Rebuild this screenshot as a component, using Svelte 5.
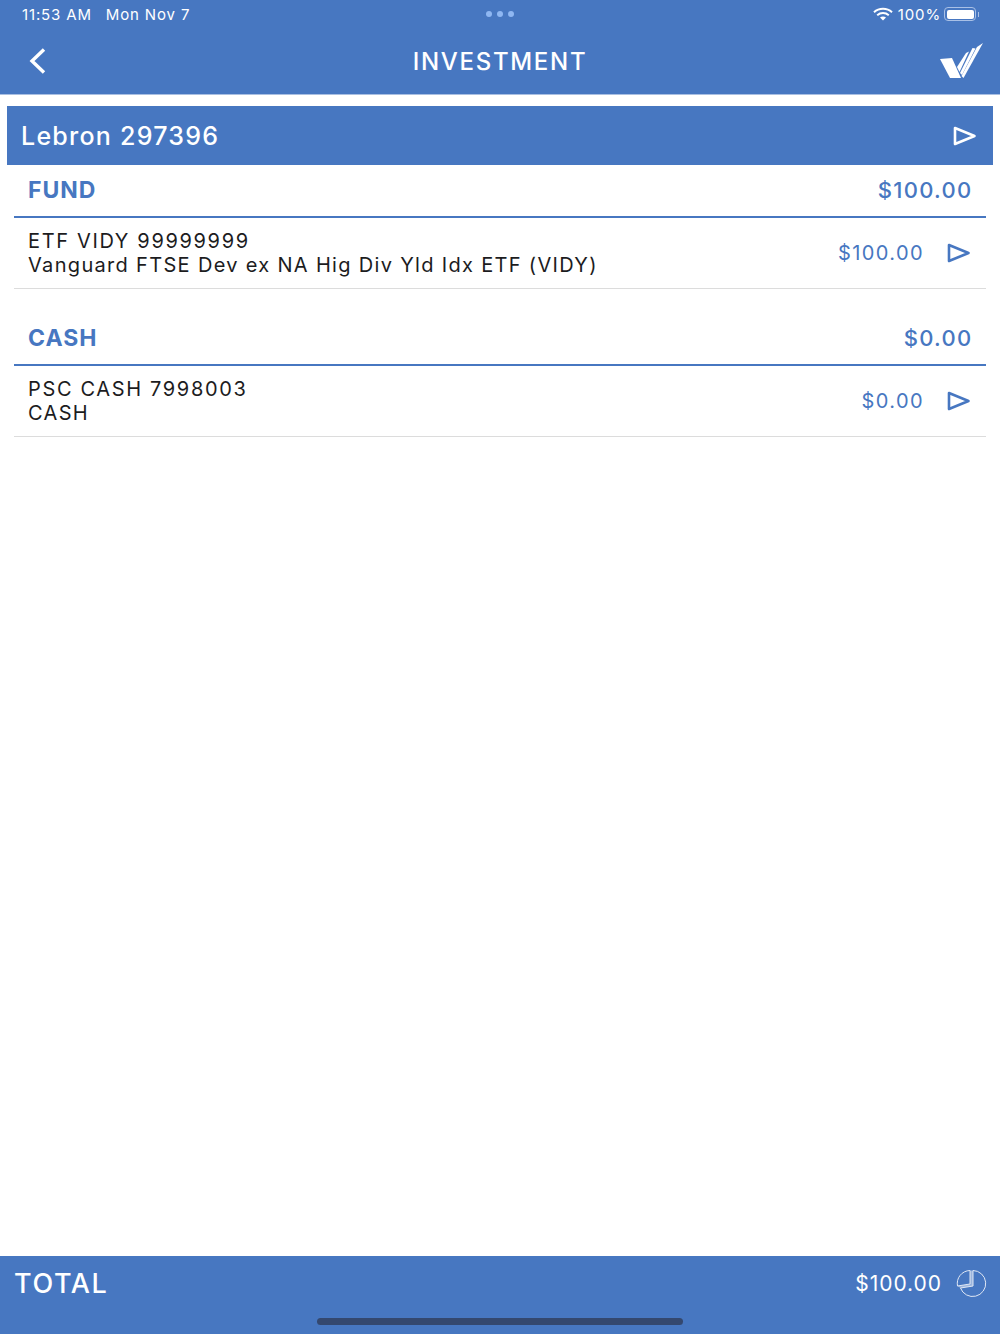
<script>
	const sections = [
		{
			title: 'FUND',
			total: '$100.00',
			rows: [{ line1: 'ETF VIDY 99999999', line2: 'Vanguard FTSE Dev ex NA Hig Div Yld Idx ETF (VIDY)', amount: '$100.00' }]
		},
		{
			title: 'CASH',
			total: '$0.00',
			rows: [{ line1: 'PSC CASH 7998003', line2: 'CASH', amount: '$0.00' }]
		}
	];
</script>

<div class="page">
	<header class="top">
		<div class="status">
			<div class="status-left">
				<span>11:53 AM</span>
				<span>Mon Nov 7</span>
			</div>
			<div class="dots"><i></i><i></i><i></i></div>
			<div class="status-right">
				<svg width="20" height="14" viewBox="0 0 20 14">
					<path d="M1 5.2C6 .6 14 .6 19 5.2" fill="none" stroke="#fff" stroke-width="2" />
					<path d="M4.2 8.2C7.6 5.4 12.4 5.4 15.8 8.2" fill="none" stroke="#fff" stroke-width="2" />
					<path d="M7 10.6C8.8 9.2 11.2 9.2 13 10.6L10 13.6Z" fill="#fff" />
				</svg>
				<span>100%</span>
				<div class="battery"><div class="battery-fill"></div></div>
				<div class="battery-cap"></div>
			</div>
		</div>
		<div class="nav">
			<svg class="back" width="20" height="28" viewBox="0 0 20 28">
				<path d="M16 2.5L4 14L16 25.5" fill="none" stroke="#fff" stroke-width="3.4" />
			</svg>
			<h1>INVESTMENT</h1>
			<svg class="logo" width="44" height="36" viewBox="0 0 44 36">
				<path d="M0 16L12 15L21 35H10Z" fill="#fff" />
				<path d="M26 10L29 8.5L19.5 29L17 24Z" fill="#fff" />
				<path d="M32.5 5L35.5 5.5L22 32L20 30Z" fill="#fff" />
				<path d="M43 0L23.5 35L21.5 33L37 4Z" fill="#fff" />
			</svg>
		</div>
	</header>

	<main class="content">
		<div class="account">
			<span>Lebron 297396</span>
			<svg width="24" height="20" viewBox="0 0 24 20">
				<path d="M2 2L21.5 10L2 18Z" fill="none" stroke="#fff" stroke-width="2.6" stroke-linejoin="round" />
			</svg>
		</div>

		{#each sections as section}
			<section>
				<div class="section-head">
					<span class="section-title">{section.title}</span>
					<span class="section-total">{section.total}</span>
				</div>
				{#each section.rows as row}
					<div class="row">
						<div class="row-text">
							<div class="line1">{row.line1}</div>
							<div class="line2">{row.line2}</div>
						</div>
						<span class="row-amount">{row.amount}</span>
						<svg width="24" height="20" viewBox="0 0 24 20">
							<path d="M2 2L21.5 10L2 18Z" fill="none" stroke="#4777c1" stroke-width="2.6" stroke-linejoin="round" />
						</svg>
					</div>
				{/each}
			</section>
		{/each}
	</main>

	<footer class="bottom">
		<div class="total-row">
			<span class="total-label">TOTAL</span>
			<div class="total-right">
				<span class="total-amount">$100.00</span>
				<svg width="32" height="30" viewBox="0 0 32 30" fill="none" stroke="#dfe7f4" stroke-width="1">
					<path d="M15 1.5L18 1.5V17L5.5 19L2.5 17L15 15Z" fill="#dfe7f4" fill-opacity="0.55" stroke="none" />
					<path d="M18 1.5A13 13 0 1 1 5.5 19L18 17Z" />
					<path d="M15 1.5V15L2.5 17A13 13 0 0 1 15 1.5Z" />
				</svg>
			</div>
		</div>
		<div class="home-indicator"></div>
	</footer>
</div>

<style>
	:global(body) {
		margin: 0;
		background: #fff;
	}

	.page {
		height: 1334px;
		display: flex;
		flex-direction: column;
		font-family: "Inter", "Liberation Sans", sans-serif;
		color: #1c1c1e;
	}

	.top {
		height: 94px;
		background: #4777c1;
		color: #fff;
		border-bottom: 1px solid #a9bfe2;
		display: flex;
		flex-direction: column;
	}

	.status {
		height: 28px;
		display: grid;
		grid-template-columns: 1fr auto 1fr;
		align-items: center;
		padding: 0 22px;
		font-size: 15px;
		letter-spacing: 0.85px;
	}

	.status-left {
		display: flex;
		gap: 14px;
	}

	.dots {
		display: flex;
		gap: 5px;
	}

	.dots i {
		width: 6px;
		height: 6px;
		border-radius: 50%;
		background: #8fb7f2;
	}

	.status-right {
		display: flex;
		justify-content: flex-end;
		align-items: center;
		gap: 5px;
		margin-right: -1px;
	}

	.battery {
		width: 32px;
		height: 14px;
		box-sizing: border-box;
		border: 1px solid #a9c0e6;
		border-radius: 4px;
		padding: 1.5px;
		margin-left: -2px;
	}

	.battery-fill {
		height: 100%;
		background: #fff;
		border-radius: 2px;
	}

	.battery-cap {
		width: 1px;
		height: 5px;
		margin-left: -3px;
		background: #a9c0e6;
	}

	.nav {
		flex: 1;
		display: grid;
		grid-template-columns: 1fr auto 1fr;
		align-items: center;
		padding: 0 22px;
	}

	.nav .back {
		margin-left: 6px;
	}

	.nav .logo {
		justify-self: end;
		margin: -1px -6px 0 0;
	}

	.nav h1 {
		margin: 0;
		font-size: 24px;
		font-weight: 500;
		letter-spacing: 1.7px;
	}

	.content {
		flex: 1;
		padding: 11px 7px 0;
	}

	.account {
		height: 59px;
		background: #4777c1;
		color: #fff;
		display: flex;
		align-items: center;
		justify-content: space-between;
		padding: 0 16px 0 14px;
		font-size: 25px;
		font-weight: 500;
		letter-spacing: 1.25px;
	}

	section {
		margin: 0 7px 24px;
	}

	.section-head {
		height: 49px;
		padding: 0 13.5px 2px 14px;
		border-bottom: 2px solid #4777c1;
		display: flex;
		align-items: center;
		justify-content: space-between;
		color: #4777c1;
		font-size: 22px;
		letter-spacing: 1.3px;
	}

	.section-title {
		font-size: 23px;
		font-weight: 700;
		letter-spacing: 1px;
	}

	.section-total {
		font-weight: 500;
	}

	.row {
		height: 70px;
		border-bottom: 1px solid #dcdcdc;
		display: flex;
		align-items: center;
		padding: 0 15px 0 14px;
		font-size: 20px;
		line-height: 24px;
		letter-spacing: 1.4px;
	}

	.row-text {
		flex: 1;
	}

	.line1 {
		letter-spacing: 1.65px;
	}

	.line2 {
		letter-spacing: 1.32px;
	}

	.row-amount {
		color: #4777c1;
		margin-right: 23px;
	}

	.bottom {
		height: 78px;
		background: #4777c1;
		color: #fff;
		display: flex;
		flex-direction: column;
		align-items: center;
	}

	.total-row {
		align-self: stretch;
		height: 55px;
		display: flex;
		align-items: center;
		justify-content: space-between;
		padding: 0 13px 0 14px;
	}

	.total-label {
		font-size: 27px;
		font-weight: 500;
		letter-spacing: 1.6px;
	}

	.total-right {
		display: flex;
		align-items: center;
		gap: 13px;
	}

	.total-amount {
		font-size: 21px;
		letter-spacing: 0.95px;
	}

	.home-indicator {
		width: 366px;
		height: 7px;
		margin-top: 7px;
		border-radius: 4px;
		background: #34486f;
	}
</style>
